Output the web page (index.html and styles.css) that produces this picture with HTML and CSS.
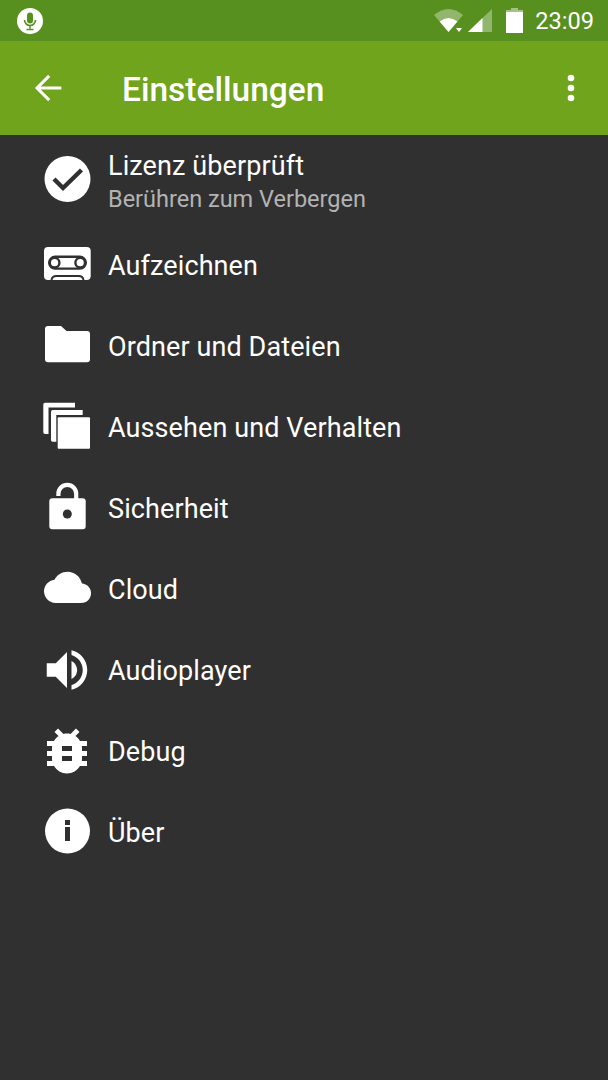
FILE: index.html
```html
<!DOCTYPE html>
<html lang="de">
<head>
    <meta charset="UTF-8">
    <meta name="viewport" content="width=device-width, initial-scale=1.0">
    <title>Einstellungen</title>
    <link rel="stylesheet" href="styles.css">
</head>
<body>
    <div class="status-bar">
        <svg class="status-mic" viewBox="0 0 26 26">
            <circle cx="13" cy="13" r="13" fill="#fff"/>
            <rect x="10" y="4.5" width="6" height="11" rx="3" fill="#58901f"/>
            <path d="M7.5 12a5.5 5.5 0 0 0 11 0M13 17.5v3M9.5 21.5h7" fill="none" stroke="#58901f" stroke-width="1.6"/>
        </svg>
        <div class="status-right">
            <svg class="status-wifi" viewBox="0 0 29 23">
                <path d="M14.5 23L0 6Q14.5 -6 29 6z" fill="#fff" fill-opacity=".35"/>
                <path d="M14.5 23L5.6 12.5Q14.5 5.5 23.4 12.5z" fill="#fff"/>
                <path d="M22 19h6l-3 4z" fill="#fff"/>
            </svg>
            <svg class="status-signal" viewBox="0 0 24 23">
                <path d="M24 0v23H0z" fill="#fff" fill-opacity=".35"/>
                <path d="M14.5 9.1V23H0z" fill="#fff"/>
            </svg>
            <svg class="status-battery" viewBox="0 0 17 25">
                <path d="M5 0h7v2h5v4H0V2h5z" fill="#fff" fill-opacity=".45"/>
                <path d="M0 4h17v21H0z" fill="#fff"/>
            </svg>
            <span class="status-time">23:09</span>
        </div>
    </div>

    <div class="toolbar">
        <svg class="back-icon" viewBox="0 0 24 24"><path d="M20 12H5.500M12.700 4.700L5.400 12l7.300 7.300" fill="none" stroke="#fff" stroke-width="1.800"/></svg>
        <h1 class="toolbar-title">Einstellungen</h1>
        <svg class="more-icon" viewBox="0 0 8 28">
            <circle cx="4" cy="4" r="3.3"/>
            <circle cx="4" cy="14" r="3.3"/>
            <circle cx="4" cy="24" r="3.3"/>
        </svg>
    </div>

    <div class="settings-list">
        <div class="item item-first">
            <svg class="item-icon" viewBox="0 0 54 54">
                <circle cx="27.500" cy="26" r="23"/>
                <path d="M14 26l9 9 18.500-18" fill="none" stroke="#303030" stroke-width="4.400"/>
            </svg>
            <div class="item-text">
                <div class="item-title">Lizenz überprüft</div>
                <div class="item-sub">Berühren zum Verbergen</div>
            </div>
        </div>
        <div class="item">
            <svg class="item-icon" viewBox="0 0 54 54">
                <rect x="4" y="9" width="46.700" height="33" rx="4"/>
                <rect x="9.200" y="18.800" width="36.600" height="11.800" rx="5.900" fill="none" stroke="#303030" stroke-width="2.400"/>
                <circle cx="14.600" cy="24.700" r="4.800" fill="#fff" stroke="#303030" stroke-width="2.400"/>
                <circle cx="40.200" cy="24.700" r="4.800" fill="#fff" stroke="#303030" stroke-width="2.400"/>
                <path d="M11.500 42q.5-4 5-4h22q4.500 0 5 4" fill="none" stroke="#303030" stroke-width="2"/>
            </svg>
            <div class="item-title">Aufzeichnen</div>
        </div>
        <div class="item">
            <svg class="item-icon" viewBox="0 0 54 54">
                <path d="M8 7h13l5.500 5H47a3 3 0 0 1 3 3v25.300a3 3 0 0 1-3 3H8a3 3 0 0 1-3-3V10a3 3 0 0 1 3-3z"/>
            </svg>
            <div class="item-title">Ordner und Dateien</div>
        </div>
        <div class="item">
            <svg class="item-icon" viewBox="0 0 54 54">
                <path d="M5 2.700h30v4.800H8.500V34H5a1.700 1.700 0 0 1-1.700-1.700V4.400A1.700 1.700 0 0 1 5 2.700z"/>
                <path d="M12.700 10h30v5H16.300v26.700h-3.600a1.700 1.700 0 0 1-1.700-1.700V11.700a1.700 1.700 0 0 1 1.700-1.700z"/>
                <rect x="17.700" y="17.300" width="32.300" height="31.400" rx="1"/>
            </svg>
            <div class="item-title">Aussehen und Verhalten</div>
        </div>
        <div class="item">
            <svg class="item-icon" viewBox="0 0 54 54">
                <path d="M18.400 15v-2.300a8.900 8.900 0 0 1 17.800 0V18" fill="none" stroke="#fff" stroke-width="4.200"/>
                <rect x="9.300" y="17.300" width="36.400" height="31" rx="3"/>
                <circle cx="27.300" cy="33" r="4.500" fill="#303030"/>
            </svg>
            <div class="item-title">Sicherheit</div>
        </div>
        <div class="item">
            <svg class="item-icon" viewBox="0 0 54 54">
                <path transform="translate(4 1.900) scale(1.960)" d="M19.350 10.040C18.670 6.590 15.640 4 12 4 9.110 4 6.600 5.640 5.350 8.040 2.340 8.360 0 10.910 0 14c0 3.310 2.690 6 6 6h13c2.760 0 5-2.240 5-5 0-2.640-2.050-4.780-4.650-4.960z"/>
            </svg>
            <div class="item-title">Cloud</div>
        </div>
        <div class="item">
            <svg class="item-icon" viewBox="0 0 24 24">
                <path d="M3 9v6h4l5 5V4L7 9H3zm13.500 3c0-1.770-1.020-3.290-2.500-4.030v8.050c1.480-.73 2.500-2.250 2.500-4.020zM14 3.230v2.060c2.890.86 5 3.540 5 6.710s-2.110 5.850-5 6.710v2.060c4.010-.91 7-4.490 7-8.770s-2.990-7.860-7-8.770z"/>
            </svg>
            <div class="item-title">Audioplayer</div>
        </div>
        <div class="item">
            <svg class="item-icon" viewBox="1.200 1.200 21.600 21.600">
                <path d="M20 8h-2.810c-.45-.78-1.070-1.450-1.820-1.960L17 4.410 15.590 3l-2.170 2.170C12.960 5.060 12.490 5 12 5c-.49 0-.96.060-1.410.17L8.410 3 7 4.410l1.620 1.630C7.880 6.550 7.260 7.220 6.810 8H4v2h2.090c-.05.33-.09.66-.09 1v1H4v2h2v1c0 .34.04.67.09 1H4v2h2.810c1.040 1.790 2.970 3 5.190 3s4.150-1.210 5.190-3H20v-2h-2.090c.05-.33.09-.66.09-1v-1h2v-2h-2v-1c0-.34-.04-.67-.09-1H20V8zm-6 8h-4v-2h4v2zm0-4h-4v-2h4v2z"/>
            </svg>
            <div class="item-title">Debug</div>
        </div>
        <div class="item">
            <svg class="item-icon" viewBox="0 0 54 54">
                <circle cx="27.500" cy="26" r="22.500"/>
                <rect x="25" y="15" width="5" height="5" fill="#303030"/>
                <rect x="25" y="22" width="5" height="14" fill="#303030"/>
            </svg>
            <div class="item-title">Über</div>
        </div>
    </div>
</body>
</html>
```

FILE: styles.css
```css
html, body {
    height: 100%;
}

body {
    margin: 0;
    background-color: #303030;
    color: #fff;
    font-family: Roboto, sans-serif;
}

svg {
    display: block;
    flex: none;
    fill: #fff;
}

.status-bar {
    height: 41px;
    background-color: #58901f;
    display: flex;
    align-items: center;
    justify-content: space-between;
    padding: 0 14px 0 17px;
}

.status-mic {
    width: 26px;
    height: 26px;
}

.status-right {
    display: flex;
    align-items: center;
}

.status-wifi {
    width: 29px;
    height: 23px;
}

.status-signal {
    width: 24px;
    height: 23px;
    margin-left: 5px;
}

.status-battery {
    width: 17px;
    height: 25px;
    margin-left: 14px;
}

.status-time {
    font-size: 23.6px;
    margin-left: 12px;
}

.toolbar {
    height: 94px;
    background-color: #6fa41c;
    display: flex;
    align-items: center;
    padding-left: 28px;
    padding-right: 33px;
}

.back-icon {
    width: 40px;
    height: 40px;
    margin-top: -1px;
}

.toolbar-title {
    flex: 1;
    margin: 2px 0 0 54px;
    font-size: 33.5px;
    font-weight: 500;
}

.more-icon {
    width: 8px;
    height: 28px;
}

.item {
    height: 81px;
    display: flex;
    align-items: center;
    gap: 14px;
    padding-left: 40px;
}

.item-first {
    height: 89px;
}

.item-icon {
    width: 54px;
    height: 54px;
}

.item-text {
    margin-top: 4px;
}

.item-title {
    font-size: 27px;
    letter-spacing: 0.1px;
}

.item > .item-title {
    margin-top: 2px;
}

.item-sub {
    font-size: 23.5px;
    color: #b3b3b3;
    margin-top: 3px;
}
```
